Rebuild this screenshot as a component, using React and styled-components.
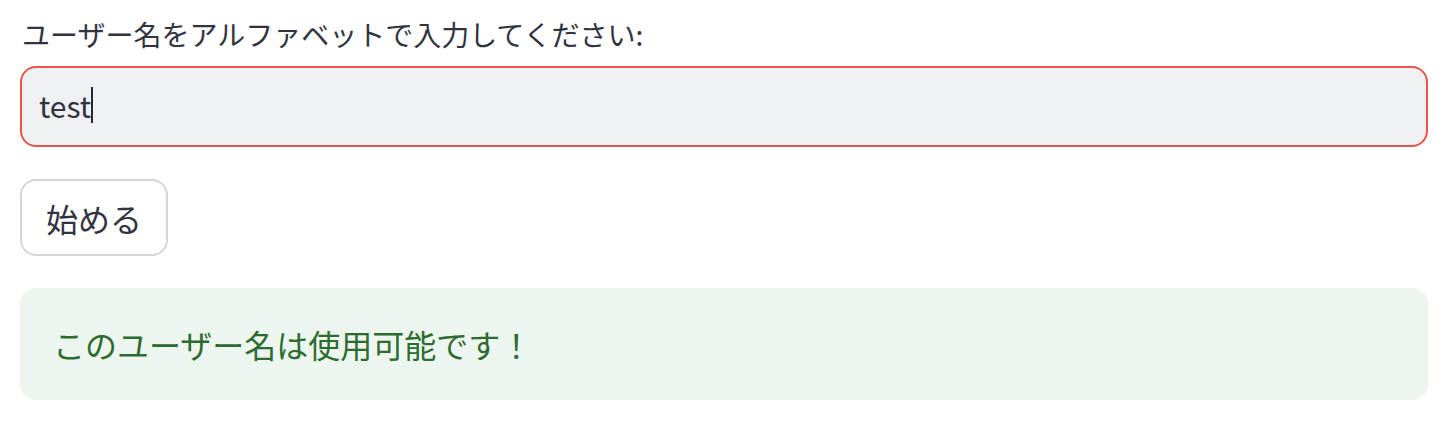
import React from 'react';
import styled, { createGlobalStyle } from 'styled-components';

const GlobalStyle = createGlobalStyle`
  body {
    margin: 0;
    background: #ffffff;
    font-family: "Noto Sans CJK JP", "Noto Sans", sans-serif;
    color: #31333f;
  }
`;

const Page = styled.div`
  display: flex;
  flex-direction: column;
  padding: 14px 28px 0 20px;
`;

const Label = styled.label`
  font-size: 28px;
  line-height: 40px;
  padding-left: 2px;
  margin-bottom: 12px;
`;

const Field = styled.div`
  box-sizing: border-box;
  height: 81px;
  display: flex;
  align-items: center;
  padding: 0 17px 3px;
  background: #eef0f4;
  border: 2px solid #e8564a;
  border-radius: 16px;
  font-size: 30px;
  color: #31333f;
`;

const Caret = styled.span`
  display: inline-block;
  width: 2px;
  height: 36px;
  background: #262730;
`;

const Button = styled.button`
  box-sizing: border-box;
  align-self: flex-start;
  margin-top: 32px;
  height: 77px;
  padding: 0 24px;
  background: #ffffff;
  border: 2px solid #d6d6d9;
  border-radius: 16px;
  font-family: inherit;
  font-size: 32px;
  color: #31333f;
`;

const Alert = styled.div`
  box-sizing: border-box;
  margin-top: 32px;
  height: 112px;
  display: flex;
  align-items: center;
  padding: 0 33px;
  background: ${(props) => (props.kind === 'success' ? '#edf6ee' : '#f0f2f6')};
  color: ${(props) => (props.kind === 'success' ? '#2e6b30' : '#31333f')};
  border-radius: 16px;
  font-size: 32px;
`;

const App = () => (
  <>
    <GlobalStyle />
    <Page>
      <Label>ユーザー名をアルファベットで入力してください:</Label>
      <Field>
        test
        <Caret />
      </Field>
      <Button>始める</Button>
      <Alert kind="success">このユーザー名は使用可能です！</Alert>
    </Page>
  </>
);

export default App;
